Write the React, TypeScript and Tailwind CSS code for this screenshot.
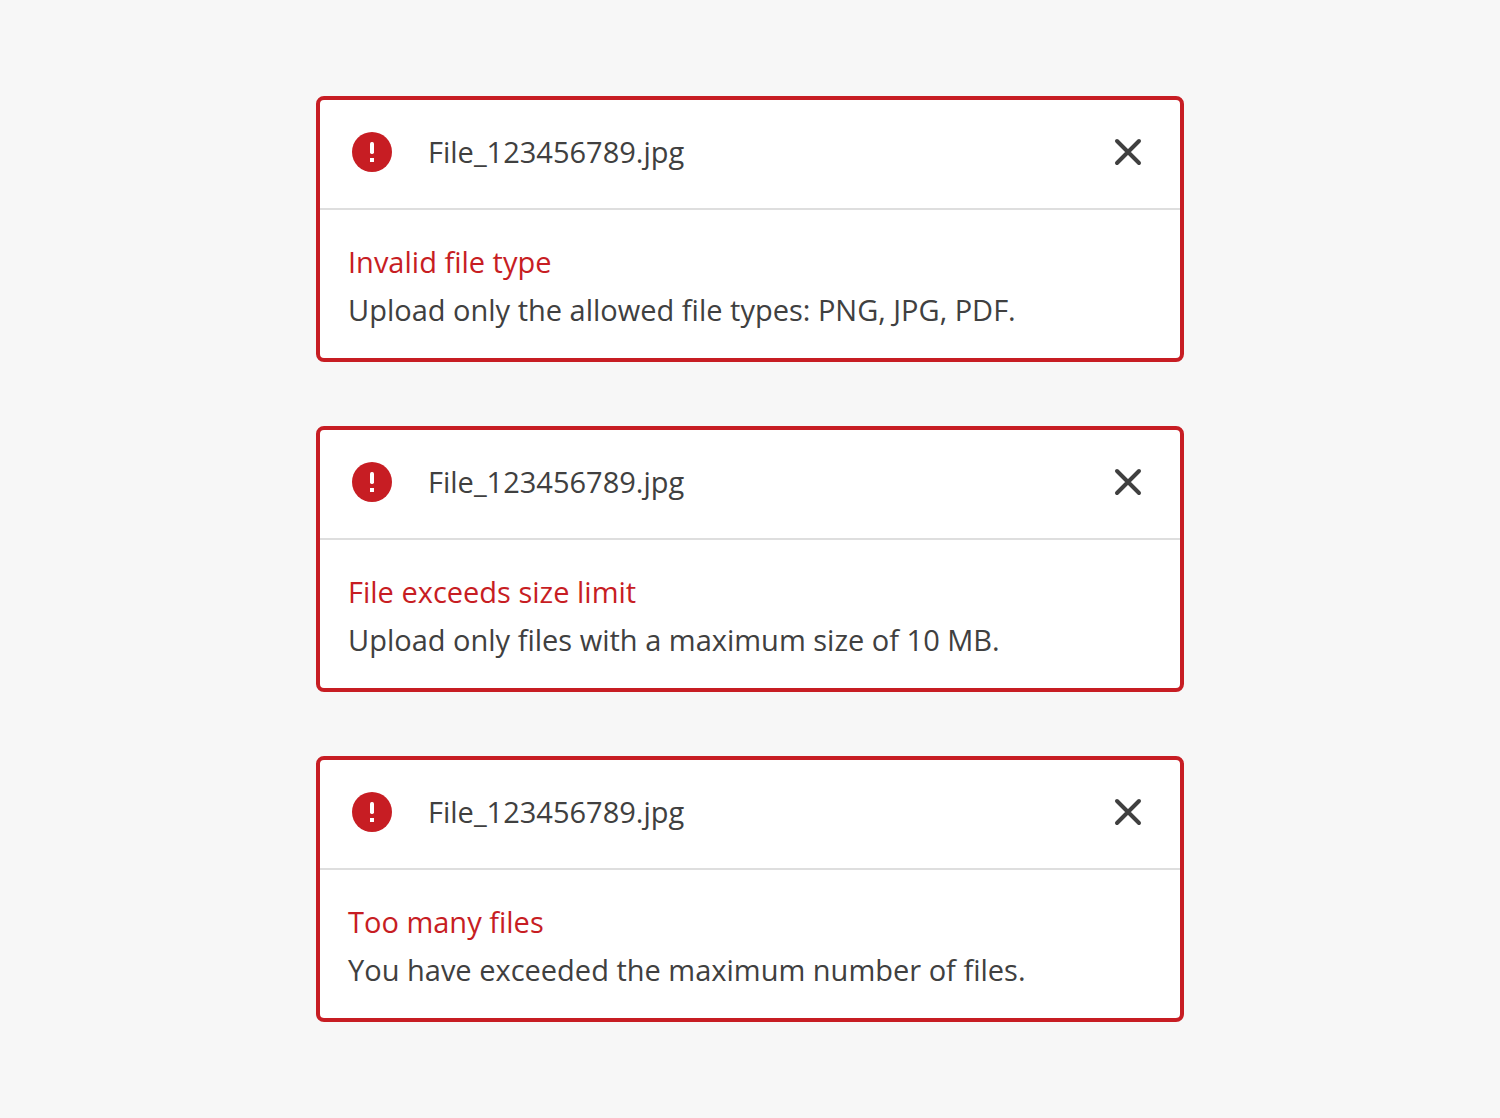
type FileError = { file: string; title: string; message: string };

const errors: FileError[] = [
  { file: "File_123456789.jpg", title: "Invalid file type", message: "Upload only the allowed file types: PNG, JPG, PDF." },
  { file: "File_123456789.jpg", title: "File exceeds size limit", message: "Upload only files with a maximum size of 10 MB." },
  { file: "File_123456789.jpg", title: "Too many files", message: "You have exceeded the maximum number of files." },
];

function ErrorIcon() {
  return (
    <svg viewBox="0 0 40 40" className="size-10 shrink-0" aria-hidden="true">
      <circle cx="20" cy="20" r="20" fill="#c71d23" />
      <rect x="18" y="10" width="4" height="12" rx="1.7" fill="#fff" />
      <rect x="18" y="26" width="4" height="4" fill="#fff" />
    </svg>
  );
}

function CloseIcon() {
  return (
    <svg viewBox="0 0 28 28" className="size-7" aria-hidden="true">
      <path d="M3 3 25 25M25 3 3 25" fill="none" stroke="#404040" strokeWidth="4" strokeLinecap="round" />
    </svg>
  );
}

function FileErrorCard({ file, title, message }: FileError) {
  return (
    <article className="rounded-lg border-4 border-[#c71d23] bg-white">
      <header className="flex items-center border-b-2 border-[#dedede] pt-7 pr-[38px] pb-8 pl-8">
        <ErrorIcon />
        <h2 className="ml-9 flex-1 leading-12">{file}</h2>
        <button type="button" aria-label={`Remove ${file}`} className="cursor-pointer">
          <CloseIcon />
        </button>
      </header>
      <div className="px-7 pt-7 pb-6 leading-12">
        <p className="text-[#c71d23]">{title}</p>
        <p>{message}</p>
      </div>
    </article>
  );
}

export default function App() {
  return (
    <main className="flex min-h-screen flex-col items-center bg-[#f7f7f7] px-6 py-24 font-['Open_Sans','Noto_Sans',sans-serif] text-[29px] text-[#404040]">
      <div className="flex w-full max-w-[868px] flex-col gap-16">
        {errors.map((error) => (
          <FileErrorCard key={error.title} {...error} />
        ))}
      </div>
    </main>
  );
}
